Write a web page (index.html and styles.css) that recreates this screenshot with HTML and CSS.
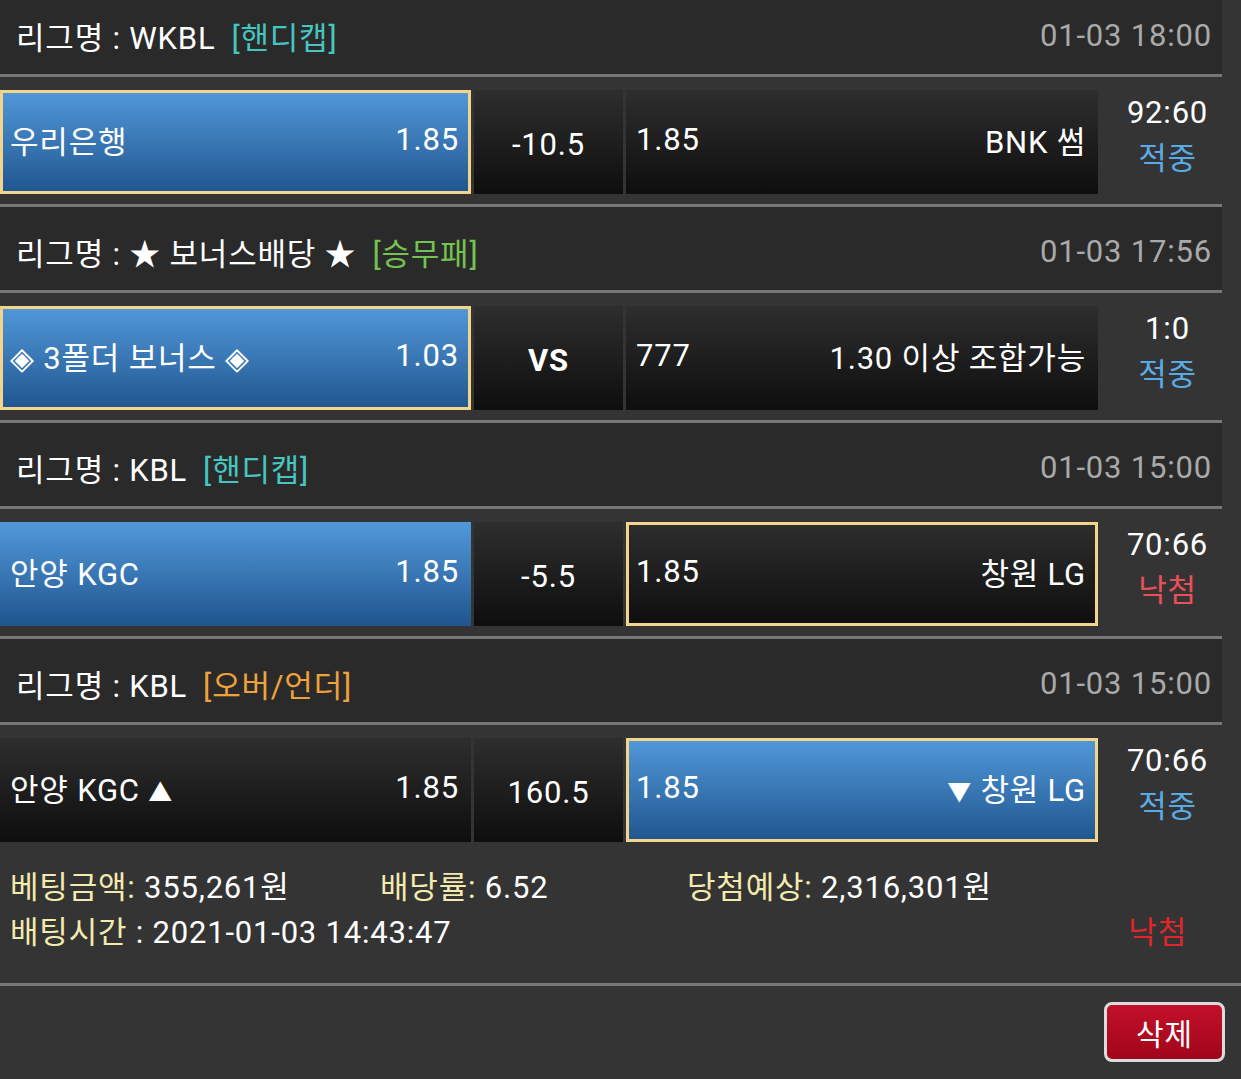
FILE: index.html
```html
<!DOCTYPE html>
<html>
<head>
    <meta charset="UTF-8">
    <title>베팅내역</title>
    <link rel="stylesheet" href="styles.css">
</head>
<body>
    <div class="bet-slip">
        <div class="game-list">
            <div class="league first">
                <span class="league-name">리그명 : WKBL</span>
                <span class="tag tag-handi">[핸디캡]</span>
                <span class="game-time">01-03 18:00</span>
            </div>
            <div class="match">
                <div class="pick home blue gold"><span>우리은행</span><span>1.85</span></div>
                <div class="pick mid">-10.5</div>
                <div class="pick away"><span>1.85</span><span>BNK 썸</span></div>
                <div class="result"><div>92:60</div><div class="hit">적중</div></div>
            </div>

            <div class="league">
                <span class="league-name">리그명 : ★ 보너스배당 ★</span>
                <span class="tag tag-win">[승무패]</span>
                <span class="game-time">01-03 17:56</span>
            </div>
            <div class="match">
                <div class="pick home blue gold"><span>◈ 3폴더 보너스 ◈</span><span>1.03</span></div>
                <div class="pick mid vs">VS</div>
                <div class="pick away"><span>777</span><span>1.30 이상 조합가능</span></div>
                <div class="result"><div>1:0</div><div class="hit">적중</div></div>
            </div>

            <div class="league">
                <span class="league-name">리그명 : KBL</span>
                <span class="tag tag-handi">[핸디캡]</span>
                <span class="game-time">01-03 15:00</span>
            </div>
            <div class="match">
                <div class="pick home blue"><span>안양 KGC</span><span>1.85</span></div>
                <div class="pick mid">-5.5</div>
                <div class="pick away gold"><span>1.85</span><span>창원 LG</span></div>
                <div class="result"><div>70:66</div><div class="miss">낙첨</div></div>
            </div>

            <div class="league">
                <span class="league-name">리그명 : KBL</span>
                <span class="tag tag-ou">[오버/언더]</span>
                <span class="game-time">01-03 15:00</span>
            </div>
            <div class="match">
                <div class="pick home"><span>안양 KGC <span class="arrow">▲</span></span><span>1.85</span></div>
                <div class="pick mid">160.5</div>
                <div class="pick away blue gold"><span>1.85</span><span><span class="arrow">▼</span> 창원 LG</span></div>
                <div class="result"><div>70:66</div><div class="hit">적중</div></div>
            </div>
        </div>

        <div class="summary">
            <div class="summary-line">
                <span><span class="label">베팅금액:</span> 355,261원</span>
                <span><span class="label">배당률:</span> 6.52</span>
                <span><span class="label">당첨예상:</span> 2,316,301원</span>
            </div>
            <div class="summary-line second">
                <span><span class="label">배팅시간</span> : 2021-01-03 14:43:47</span>
                <span class="final-miss">낙첨</span>
            </div>
        </div>
    </div>

    <div class="actions">
        <button class="delete-btn">삭제</button>
    </div>
</body>
</html>
```

FILE: styles.css
```css
body {
    margin: 0;
    padding: 0;
    font-family: Roboto, "Noto Sans CJK KR", sans-serif;
    font-size: 31px;
    letter-spacing: 0.8px;
    background-color: #343434;
    color: #fff;
    overflow: hidden;
}
.game-list {
    width: 1222px;
    margin-top: -9px;
}
.league {
    display: flex;
    align-items: center;
    height: 86px;
    padding: 6px 10px 0 16px;
    box-sizing: border-box;
    background-color: #2a2a2a;
    border-top: 3px solid #777;
}
.league.first {
    height: 83px;
    border-top: none;
}
.tag {
    margin-left: 16px;
}
.tag-handi {
    color: #45c6c0;
}
.tag-win {
    color: #74c24f;
}
.tag-ou {
    color: #f0a23a;
}
.game-time {
    margin-left: auto;
    color: #a9a9a9;
}
.match {
    display: grid;
    grid-template-columns: 471px 149px 472px 1fr;
    column-gap: 3px;
    padding: 13px 0 10px;
    border-top: 3px solid #777;
}
.pick {
    display: flex;
    align-items: center;
    justify-content: space-between;
    height: 104px;
    padding: 0 12px 5px 10px;
    background: linear-gradient(#2e2e2e, #0e0e0e);
    box-sizing: border-box;
}
.pick.blue {
    background: linear-gradient(#5299da, #1f558e);
}
.pick.gold {
    box-shadow: inset 0 0 0 3px #f2d58a;
}
.pick.mid {
    justify-content: center;
    padding: 4px 0 0;
}
.pick.vs {
    font-weight: bold;
}
.arrow {
    font-size: 24px;
}
.result {
    display: flex;
    flex-direction: column;
    align-items: center;
    justify-content: center;
    padding: 0 0 12px 12px;
    line-height: 46px;
}
.hit {
    color: #5aaae6;
}
.miss {
    color: #ea4f5a;
}
.summary {
    padding: 13px 54px 28px 10px;
    border-bottom: 3px solid #777;
    line-height: 45px;
}
.summary-line {
    display: grid;
    grid-template-columns: 370px 307px auto;
}
.summary-line.second {
    display: flex;
    justify-content: space-between;
}
.label {
    color: #f3ebae;
}
.final-miss {
    color: #e0252b;
}
.actions {
    display: flex;
    justify-content: flex-end;
    padding: 16px 16px 0 0;
}
.delete-btn {
    width: 121px;
    height: 60px;
    padding: 0;
    font-family: inherit;
    font-size: 30px;
    letter-spacing: 1px;
    color: #fff;
    background: linear-gradient(#c2102a, #a1061b);
    border: 3px solid #dcdcdc;
    border-radius: 8px;
}
```
